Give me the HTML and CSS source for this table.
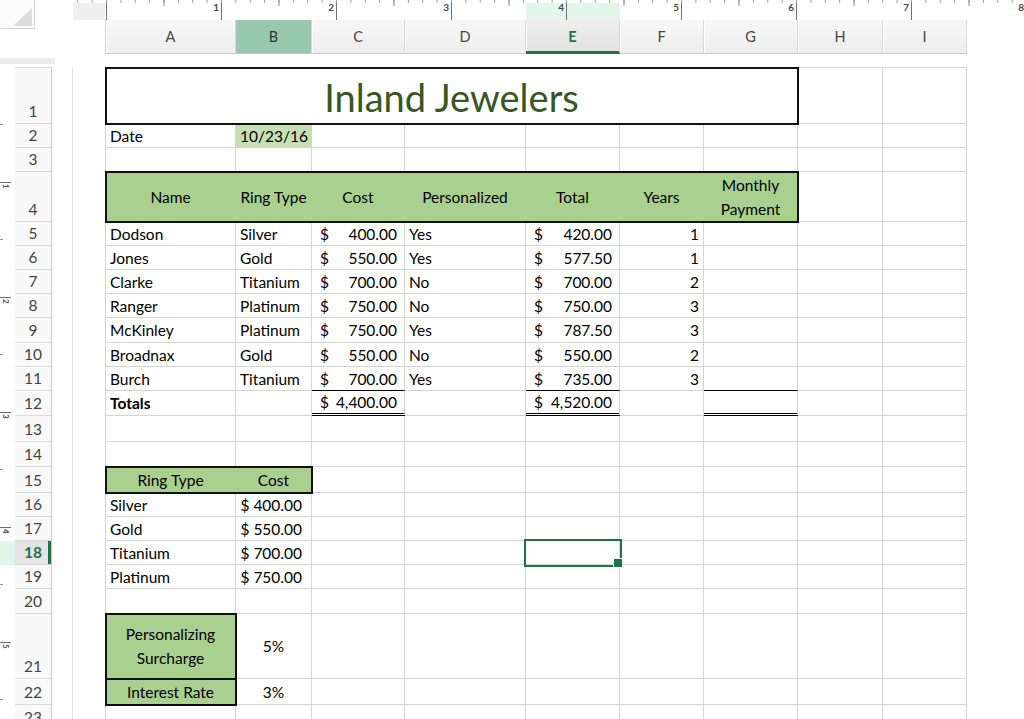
FILE: index.html
```html
<!DOCTYPE html>
<html>
<head>
<meta charset="utf-8">
<title>Inland Jewelers</title>
<link rel="stylesheet" href="styles.css">
</head>
<body>
<div class="app">
  <div class="top">
    <div class="lzone">
      <div class="corner">
        <svg width="34" height="28" viewBox="0 0 34 28"><path d="M13 26 L32 26 L32 8 Z" fill="#dcdcdc"/></svg>
      </div>
    </div>
    <div class="rzone">
      <svg class="ruler" width="951" height="20" viewBox="0 0 951 20">
        <defs>
          <pattern id="hs" x="33" y="0" width="14.375" height="20" patternUnits="userSpaceOnUse"><rect x="0" y="0" width="1" height="3" fill="#a0a0a0"/></pattern>
          <pattern id="hh" x="90.5" y="0" width="115" height="20" patternUnits="userSpaceOnUse"><rect x="0" y="0" width="1" height="6" fill="#8c8c8c"/></pattern>
          <pattern id="hi" x="33" y="0" width="115" height="20" patternUnits="userSpaceOnUse"><rect x="0" y="3" width="1" height="17" fill="#6f6f6f"/></pattern>
        </defs>
        <rect x="0" y="3" width="32" height="17" fill="#efefef"/>
        <rect x="453" y="3" width="94" height="17" fill="#e3f6ec"/>
        <rect x="0" y="0" width="951" height="20" fill="url(#hs)"/>
        <rect x="0" y="0" width="951" height="20" fill="url(#hh)"/>
        <rect x="0" y="0" width="951" height="20" fill="url(#hi)"/>
        <g class="rnum">
          <text x="146" y="11">1</text>
          <text x="261" y="11">2</text>
          <text x="376" y="11">3</text>
          <text x="491" y="11">4</text>
          <text x="606" y="11">5</text>
          <text x="721" y="11">6</text>
          <text x="836" y="11">7</text>
          <text x="951" y="11">8</text>
        </g>
      </svg>
      <div class="colheads">
        <div class="ch A">A</div>
        <div class="ch B chb">B</div>
        <div class="ch C">C</div>
        <div class="ch D">D</div>
        <div class="ch E che">E</div>
        <div class="ch F">F</div>
        <div class="ch G">G</div>
        <div class="ch H">H</div>
        <div class="ch I">I</div>
      </div>
    </div>
  </div>
  <div class="gap"><div class="gapbar"></div></div>
  <div class="main">
    <svg class="vruler" width="15" height="652" viewBox="0 0 15 652">
      <rect x="0" y="474" width="15" height="24" fill="#e3f6ec"/>
      <g fill="#8c8c8c">
        <rect x="0" y="57" width="3" height="1"/>
        <rect x="0" y="172" width="3" height="1"/>
        <rect x="0" y="287" width="3" height="1"/>
        <rect x="0" y="402" width="3" height="1"/>
        <rect x="0" y="517" width="3" height="1"/>
        <rect x="0" y="632" width="3" height="1"/>
      </g>
      <g fill="#6f6f6f">
        <rect x="0" y="115" width="11" height="1"/>
        <rect x="0" y="230" width="11" height="1"/>
        <rect x="0" y="345" width="11" height="1"/>
        <rect x="0" y="460" width="11" height="1"/>
        <rect x="0" y="575" width="11" height="1"/>
      </g>
      <g class="vnum">
        <text transform="translate(3 117) rotate(90)">1</text>
        <text transform="translate(3 232) rotate(90)">2</text>
        <text transform="translate(3 347) rotate(90)">3</text>
        <text transform="translate(3 462) rotate(90)">4</text>
        <text transform="translate(3 577) rotate(90)">5</text>
      </g>
    </svg>
    <div class="rowheads">
      <div class="rh h56">1</div>
      <div class="rh h24">2</div>
      <div class="rh h24">3</div>
      <div class="rh h50">4</div>
      <div class="rh h24">5</div>
      <div class="rh h24">6</div>
      <div class="rh h24">7</div>
      <div class="rh h24">8</div>
      <div class="rh h25">9</div>
      <div class="rh h24">10</div>
      <div class="rh h24">11</div>
      <div class="rh h25">12</div>
      <div class="rh h26">13</div>
      <div class="rh h25">14</div>
      <div class="rh h26">15</div>
      <div class="rh h24">16</div>
      <div class="rh h24">17</div>
      <div class="rh h24 rh-sel">18</div>
      <div class="rh h24">19</div>
      <div class="rh h25">20</div>
      <div class="rh h65">21</div>
      <div class="rh h26">22</div>
      <div class="rh h25">23</div>
    </div>
    <div class="gutter"></div>
    <div class="sheet">
      <div class="row h56">
        <div class="c title">Inland Jewelers</div>
        <div class="c H"></div><div class="c I"></div>
      </div>
      <div class="row h24">
        <div class="c A">Date</div>
        <div class="c B date">10/23/16</div>
        <div class="c C"></div><div class="c D"></div><div class="c E"></div><div class="c F"></div><div class="c G"></div><div class="c H"></div><div class="c I"></div>
      </div>
      <div class="row h24">
        <div class="c A"></div><div class="c B"></div><div class="c C"></div><div class="c D"></div><div class="c E"></div><div class="c F"></div><div class="c G"></div><div class="c H"></div><div class="c I"></div>
      </div>
      <div class="row h50">
        <div class="box hdr">
          <div class="c A ctr">Name</div>
          <div class="c B ctr">Ring Type</div>
          <div class="c C ctr">Cost</div>
          <div class="c D ctr">Personalized</div>
          <div class="c E ctr">Total</div>
          <div class="c F ctr">Years</div>
          <div class="c G ctr wrap">Monthly Payment</div>
        </div>
        <div class="c H"></div><div class="c I"></div>
      </div>
      <div class="row h24">
        <div class="c A">Dodson</div><div class="c B">Silver</div>
        <div class="c C acc"><span>$</span><span>400.00</span></div>
        <div class="c D">Yes</div>
        <div class="c E acc"><span>$</span><span>420.00</span></div>
        <div class="c F num">1</div><div class="c G"></div><div class="c H"></div><div class="c I"></div>
      </div>
      <div class="row h24">
        <div class="c A">Jones</div><div class="c B">Gold</div>
        <div class="c C acc"><span>$</span><span>550.00</span></div>
        <div class="c D">Yes</div>
        <div class="c E acc"><span>$</span><span>577.50</span></div>
        <div class="c F num">1</div><div class="c G"></div><div class="c H"></div><div class="c I"></div>
      </div>
      <div class="row h24">
        <div class="c A">Clarke</div><div class="c B">Titanium</div>
        <div class="c C acc"><span>$</span><span>700.00</span></div>
        <div class="c D">No</div>
        <div class="c E acc"><span>$</span><span>700.00</span></div>
        <div class="c F num">2</div><div class="c G"></div><div class="c H"></div><div class="c I"></div>
      </div>
      <div class="row h24">
        <div class="c A">Ranger</div><div class="c B">Platinum</div>
        <div class="c C acc"><span>$</span><span>750.00</span></div>
        <div class="c D">No</div>
        <div class="c E acc"><span>$</span><span>750.00</span></div>
        <div class="c F num">3</div><div class="c G"></div><div class="c H"></div><div class="c I"></div>
      </div>
      <div class="row h25">
        <div class="c A">McKinley</div><div class="c B">Platinum</div>
        <div class="c C acc"><span>$</span><span>750.00</span></div>
        <div class="c D">Yes</div>
        <div class="c E acc"><span>$</span><span>787.50</span></div>
        <div class="c F num">3</div><div class="c G"></div><div class="c H"></div><div class="c I"></div>
      </div>
      <div class="row h24">
        <div class="c A">Broadnax</div><div class="c B">Gold</div>
        <div class="c C acc"><span>$</span><span>550.00</span></div>
        <div class="c D">No</div>
        <div class="c E acc"><span>$</span><span>550.00</span></div>
        <div class="c F num">2</div><div class="c G"></div><div class="c H"></div><div class="c I"></div>
      </div>
      <div class="row h24">
        <div class="c A">Burch</div><div class="c B">Titanium</div>
        <div class="c C acc line-b"><span>$</span><span>700.00</span></div>
        <div class="c D">Yes</div>
        <div class="c E acc line-b"><span>$</span><span>735.00</span></div>
        <div class="c F num">3</div><div class="c G line-b"></div><div class="c H"></div><div class="c I"></div>
      </div>
      <div class="row h25">
        <div class="c A bold">Totals</div><div class="c B"></div>
        <div class="c C acc dbl"><span>$</span><span>4,400.00</span></div>
        <div class="c D"></div>
        <div class="c E acc dbl"><span>$</span><span>4,520.00</span></div>
        <div class="c F"></div><div class="c G dbl"></div><div class="c H"></div><div class="c I"></div>
      </div>
      <div class="row h26">
        <div class="c A"></div><div class="c B"></div><div class="c C"></div><div class="c D"></div><div class="c E"></div><div class="c F"></div><div class="c G"></div><div class="c H"></div><div class="c I"></div>
      </div>
      <div class="row h25">
        <div class="c A"></div><div class="c B"></div><div class="c C"></div><div class="c D"></div><div class="c E"></div><div class="c F"></div><div class="c G"></div><div class="c H"></div><div class="c I"></div>
      </div>
      <div class="row h26">
        <div class="box hdr">
          <div class="c A ctr">Ring Type</div>
          <div class="c B ctr">Cost</div>
        </div>
        <div class="c C"></div><div class="c D"></div><div class="c E"></div><div class="c F"></div><div class="c G"></div><div class="c H"></div><div class="c I"></div>
      </div>
      <div class="row h24">
        <div class="c A">Silver</div><div class="c B cur">$ 400.00</div>
        <div class="c C"></div><div class="c D"></div><div class="c E"></div><div class="c F"></div><div class="c G"></div><div class="c H"></div><div class="c I"></div>
      </div>
      <div class="row h24">
        <div class="c A">Gold</div><div class="c B cur">$ 550.00</div>
        <div class="c C"></div><div class="c D"></div><div class="c E"></div><div class="c F"></div><div class="c G"></div><div class="c H"></div><div class="c I"></div>
      </div>
      <div class="row h24">
        <div class="c A">Titanium</div><div class="c B cur">$ 700.00</div>
        <div class="c C"></div><div class="c D"></div><div class="c E sel"></div><div class="c F"></div><div class="c G"></div><div class="c H"></div><div class="c I"></div>
      </div>
      <div class="row h24">
        <div class="c A">Platinum</div><div class="c B cur">$ 750.00</div>
        <div class="c C"></div><div class="c D"></div><div class="c E"></div><div class="c F"></div><div class="c G"></div><div class="c H"></div><div class="c I"></div>
      </div>
      <div class="row h25">
        <div class="c A"></div><div class="c B"></div><div class="c C"></div><div class="c D"></div><div class="c E"></div><div class="c F"></div><div class="c G"></div><div class="c H"></div><div class="c I"></div>
      </div>
      <div class="row h65">
        <div class="c A ctr wrap boxed">Personalizing Surcharge</div>
        <div class="c B ctr">5%</div>
        <div class="c C"></div><div class="c D"></div><div class="c E"></div><div class="c F"></div><div class="c G"></div><div class="c H"></div><div class="c I"></div>
      </div>
      <div class="row h26">
        <div class="c A ctr boxed">Interest Rate</div>
        <div class="c B ctr">3%</div>
        <div class="c C"></div><div class="c D"></div><div class="c E"></div><div class="c F"></div><div class="c G"></div><div class="c H"></div><div class="c I"></div>
      </div>
      <div class="row h25">
        <div class="c A"></div><div class="c B"></div><div class="c C"></div><div class="c D"></div><div class="c E"></div><div class="c F"></div><div class="c G"></div><div class="c H"></div><div class="c I"></div>
      </div>
    </div>
  </div>
</div>
</body>
</html>
```

FILE: styles.css
```css
* { box-sizing: border-box; }

html, body {
  margin: 0;
  padding: 0;
  background: #ffffff;
}

body {
  width: 1024px;
  height: 719px;
  overflow: hidden;
  font-family: Lato, "Open Sans", "DejaVu Sans", sans-serif;
}

.app {
  width: 1024px;
  height: 719px;
  display: flex;
  flex-direction: column;
}

/* ---------- top: corner, ruler, column headers ---------- */
.top {
  display: flex;
  height: 54px;
  flex-shrink: 0;
}

.lzone {
  width: 73px;
  flex-shrink: 0;
}

.corner {
  width: 35px;
  height: 29px;
  background: #fbfbfb;
  border-right: 1px solid #d2d2d2;
  border-bottom: 1px solid #d2d2d2;
}

.corner svg { display: block; }

.rzone {
  width: 951px;
  display: flex;
  flex-direction: column;
}

.ruler { display: block; }

.rnum text {
  font-family: Lato, "DejaVu Sans", sans-serif;
  font-size: 10px;
  font-weight: 700;
  fill: #4a4a4a;
  text-anchor: end;
}

.colheads {
  display: flex;
  margin-left: 32px;
  height: 34px;
  width: 862px;
  border-left: 1px solid #d6d6d6;
}

.ch {
  flex-shrink: 0;
  height: 34px;
  display: flex;
  align-items: center;
  justify-content: center;
  font-size: 14.5px;
  color: #444;
  background: linear-gradient(#f7f7f7, #eeeeee);
  border-right: 1px solid #d9d9d9;
  border-bottom: 1px solid #c9c9c9;
  box-shadow: inset 1px 0 0 #ffffff;
}

.chb {
  background: #98c9ae;
  box-shadow: none;
  color: #333;
}

.che {
  background: linear-gradient(#efefef, #e2e2e2);
  border-bottom: 3px solid #217346;
  color: #217346;
  font-weight: 700;
  padding-top: 2px;
}

/* ---------- gap row ---------- */
.gap {
  height: 13px;
  flex-shrink: 0;
}

.gapbar {
  width: 55px;
  height: 6px;
  margin-top: 4px;
  background: #ececec;
}

/* ---------- main area ---------- */
.main {
  display: flex;
  height: 652px;
  flex-shrink: 0;
}

.vruler {
  display: block;
  flex-shrink: 0;
}

.vnum text {
  font-family: Lato, "DejaVu Sans", sans-serif;
  font-size: 8px;
  font-weight: 700;
  fill: #4a4a4a;
}

.rowheads {
  width: 37px;
  flex-shrink: 0;
  background: #f9f9f9;
  border-right: 1px solid #c9c9c9;
  border-top: 1px solid #d9d9d9;
}

.rh {
  display: flex;
  align-items: flex-end;
  justify-content: center;
  line-height: 24px;
  font-size: 15.5px;
  color: #444;
  border-bottom: 1px solid #dcdcdc;
}

.rh-sel {
  background: #e4e4e4;
  color: #217346;
  font-weight: 700;
  box-shadow: inset -3px 0 0 #217346;
}

.gutter {
  width: 33px;
  margin-left: 20px;
  flex-shrink: 0;
  border-left: 1px solid #e3e3e3;
}

/* ---------- sheet ---------- */
.sheet {
  width: 862px;
  flex-shrink: 0;
  border-left: 1px solid #d4d4d4;
  border-top: 1px solid #d4d4d4;
}

.row {
  display: flex;
}

.h24 { height: 24px; }
.h25 { height: 25px; }
.h26 { height: 26px; }
.h50 { height: 50px; }
.h56 { height: 56px; }
.h65 { height: 65px; }

.c {
  flex-shrink: 0;
  display: flex;
  align-items: center;
  padding: 0 4px;
  font-size: 15.5px;
  color: #000;
  white-space: nowrap;
  border-right: 1px solid #d4d4d4;
  border-bottom: 1px solid #d4d4d4;
}

.A { width: 130px; }
.B { width: 76px; }
.C { width: 93px; }
.D { width: 121px; }
.E { width: 94px; }
.F { width: 84px; }
.G { width: 94px; }
.H { width: 85px; }
.I { width: 84px; }

.title {
  width: 692px;
  justify-content: center;
  font-size: 38px;
  color: #375623;
  padding-top: 2px;
  outline: 2px solid #111;
  outline-offset: -1px;
  position: relative;
  z-index: 2;
}

.date {
  background: #c6e0b4;
  justify-content: flex-end;
  padding-right: 3px;
  border-color: #c6e0b4;
}

.box {
  display: flex;
  position: relative;
  z-index: 2;
  outline: 2px solid #111;
  outline-offset: -1px;
}

.hdr {
  background: #a9d08e;
}

.hdr .c {
  border-right-color: transparent;
  border-bottom-color: transparent;
}

.ctr {
  justify-content: center;
  text-align: center;
}

.wrap {
  white-space: normal;
  line-height: 24px;
}

.acc {
  justify-content: space-between;
  padding: 0 7px 0 8px;
}

.num {
  justify-content: flex-end;
  padding-right: 4px;
}

.cur {
  justify-content: flex-end;
  padding-right: 9px;
}

.bold { font-weight: 700; }

.line-b { border-bottom-color: #000; }

.dbl { border-bottom: 3px double #000; }

.boxed {
  background: #a9d08e;
  outline: 2px solid #111;
  outline-offset: -1px;
  position: relative;
  z-index: 2;
  padding: 0 6px;
}

.sel {
  position: relative;
  z-index: 3;
  outline: 2px solid #217346;
  outline-offset: 0;
}

.sel::after {
  content: "";
  position: absolute;
  right: -4px;
  bottom: -4px;
  width: 8px;
  height: 8px;
  background: #217346;
  border: 1px solid #ffffff;
}
```
